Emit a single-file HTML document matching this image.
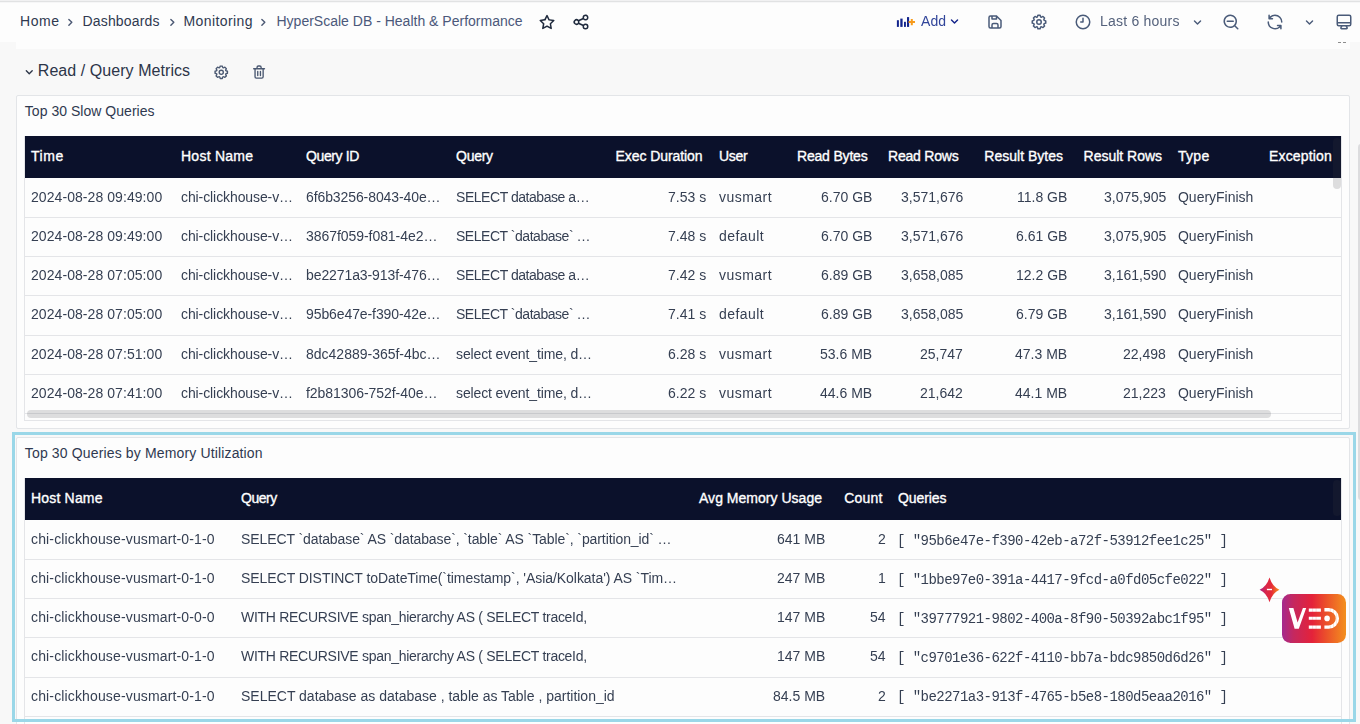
<!DOCTYPE html>
<html><head><meta charset="utf-8"><title>HyperScale DB - Health &amp; Performance</title>
<style>
*{box-sizing:border-box;margin:0;padding:0}
html,body{width:1360px;height:724px;overflow:hidden}
body{background:#f8f8f8;font-family:"Liberation Sans",sans-serif;font-size:14px;color:#353f52;position:relative}
.abs{position:absolute}
.t{position:absolute;white-space:nowrap;line-height:20px;height:20px}
.g{will-change:transform}
.r{text-align:right}
.hd{color:#fff;-webkit-text-stroke:0.35px #fff}
.mono{font-family:"Liberation Mono",monospace;font-size:14px}
.bc{color:#2f3950}
svg{position:absolute;overflow:visible}
.ln{position:absolute;height:1px;background:#e4e5e8}
</style></head><body>
<!-- top bar -->
<div class="abs" style="left:0;top:0;width:1360px;height:42px;background:#fdfdfd"></div>
<div class="abs" style="left:16px;top:42px;width:1334px;height:7px;background:#fdfdfd"></div>
<div class="abs" style="left:0;top:0;width:1360px;height:1px;background:#f1f1f2"></div>
<div class="abs" style="left:0;top:1px;width:1360px;height:1px;background:#e1e2e3"></div>
<div class="abs" style="left:0;top:2px;width:1360px;height:1px;background:#f6f6f7"></div>
<div class="abs" style="left:1338px;top:42px;width:3px;height:1px;background:#8d8d8d"></div>
<div class="abs" style="left:1343px;top:42px;width:3px;height:1px;background:#8d8d8d"></div>

<div class="t bc" style="left:20px;top:11.0px;letter-spacing:0.547px;">Home</div>
<div class="t bc" style="left:82.5px;top:11.0px;letter-spacing:0.167px;">Dashboards</div>
<div class="t bc" style="left:183.5px;top:11.0px;letter-spacing:0.403px;">Monitoring</div>
<div class="t " style="left:276.5px;top:11.0px;letter-spacing:0.004px;color:#4b587a">HyperScale DB - Health &amp; Performance</div>
<div class="t g" style="left:921px;top:11.0px;letter-spacing:0.039px;color:#31459a">Add</div>
<div class="t g" style="left:1100px;top:11.0px;letter-spacing:0.222px;color:#55627c">Last 6 hours</div>
<!-- row title -->
<div class="t " style="left:37.8px;top:60.7px;letter-spacing:0.060px;font-size:16px;color:#2c3548">Read / Query Metrics</div>
<!-- panel 1 -->
<div class="abs" style="left:16px;top:95px;width:1334px;height:334px;background:#fdfdfd;border:1px solid #e3e5e8;border-radius:2px"></div>
<div class="abs" style="left:24px;top:136px;width:1318px;height:285px;border:1px solid #e4e5e8;border-top:0"></div>
<div class="abs" style="left:25px;top:136px;width:1316px;height:42px;background:#0b112b"></div>

<div class="t bc" style="left:24.8px;top:101.0px;letter-spacing:0.034px;">Top 30 Slow Queries</div>
<div class="t hd" style="left:31px;top:146.0px;letter-spacing:0.535px;">Time</div>
<div class="t hd" style="left:181px;top:146.0px;letter-spacing:0.246px;">Host Name</div>
<div class="t hd" style="left:306px;top:146.0px;letter-spacing:-0.388px;">Query ID</div>
<div class="t hd" style="left:456px;top:146.0px;letter-spacing:-0.256px;">Query</div>
<div class="t r hd" style="right:657.47px;top:146.0px;letter-spacing:-0.070px;">Exec Duration</div>
<div class="t hd" style="left:719px;top:146.0px;letter-spacing:-0.288px;">User</div>
<div class="t r hd" style="right:492.49px;top:146.0px;letter-spacing:-0.186px;">Read Bytes</div>
<div class="t r hd" style="right:401.51px;top:146.0px;letter-spacing:-0.209px;">Read Rows</div>
<div class="t r hd" style="right:296.99px;top:146.0px;letter-spacing:0.010px;">Result Bytes</div>
<div class="t r hd" style="right:198.02px;top:146.0px;letter-spacing:-0.019px;">Result Rows</div>
<div class="t hd" style="left:1178px;top:146.0px;letter-spacing:0.280px;">Type</div>
<div class="t r hd" style="right:28.15px;top:146.0px;letter-spacing:0.152px;">Exception</div>
<div class="t g" style="left:31px;top:186.8px;letter-spacing:0.067px;">2024-08-28 09:49:00</div>
<div class="t g" style="left:181px;top:186.8px;letter-spacing:-0.093px;">chi-clickhouse-v…</div>
<div class="t g" style="left:306px;top:186.8px;letter-spacing:-0.096px;">6f6b3256-8043-40e…</div>
<div class="t g" style="left:456px;top:186.8px;letter-spacing:-0.452px;">SELECT database a…</div>
<div class="t r g" style="right:653.50px;top:186.8px;">7.53 s</div>
<div class="t g" style="left:719px;top:186.8px;letter-spacing:0.467px;">vusmart</div>
<div class="t r g" style="right:488.00px;top:186.8px;">6.70 GB</div>
<div class="t r g" style="right:397.00px;top:186.8px;">3,571,676</div>
<div class="t r g" style="right:293.00px;top:186.8px;">11.8 GB</div>
<div class="t r g" style="right:194.00px;top:186.8px;">3,075,905</div>
<div class="t g" style="left:1178px;top:186.8px;letter-spacing:-0.017px;">QueryFinish</div>
<div class="ln" style="left:25px;top:217px;width:1316px"></div>
<div class="t g" style="left:31px;top:226.0px;letter-spacing:0.067px;">2024-08-28 09:49:00</div>
<div class="t g" style="left:181px;top:226.0px;letter-spacing:-0.093px;">chi-clickhouse-v…</div>
<div class="t g" style="left:306px;top:226.0px;letter-spacing:-0.055px;">3867f059-f081-4e2…</div>
<div class="t g" style="left:456px;top:226.0px;letter-spacing:-0.468px;">SELECT `database` …</div>
<div class="t r g" style="right:653.50px;top:226.0px;">7.48 s</div>
<div class="t g" style="left:719px;top:226.0px;letter-spacing:0.426px;">default</div>
<div class="t r g" style="right:488.00px;top:226.0px;">6.70 GB</div>
<div class="t r g" style="right:397.00px;top:226.0px;">3,571,676</div>
<div class="t r g" style="right:293.00px;top:226.0px;">6.61 GB</div>
<div class="t r g" style="right:194.00px;top:226.0px;">3,075,905</div>
<div class="t g" style="left:1178px;top:226.0px;letter-spacing:-0.017px;">QueryFinish</div>
<div class="ln" style="left:25px;top:256px;width:1316px"></div>
<div class="t g" style="left:31px;top:265.2px;letter-spacing:0.067px;">2024-08-28 07:05:00</div>
<div class="t g" style="left:181px;top:265.2px;letter-spacing:-0.093px;">chi-clickhouse-v…</div>
<div class="t g" style="left:306px;top:265.2px;letter-spacing:-0.096px;">be2271a3-913f-476…</div>
<div class="t g" style="left:456px;top:265.2px;letter-spacing:-0.452px;">SELECT database a…</div>
<div class="t r g" style="right:653.50px;top:265.2px;">7.42 s</div>
<div class="t g" style="left:719px;top:265.2px;letter-spacing:0.467px;">vusmart</div>
<div class="t r g" style="right:488.00px;top:265.2px;">6.89 GB</div>
<div class="t r g" style="right:397.00px;top:265.2px;">3,658,085</div>
<div class="t r g" style="right:293.00px;top:265.2px;">12.2 GB</div>
<div class="t r g" style="right:194.00px;top:265.2px;">3,161,590</div>
<div class="t g" style="left:1178px;top:265.2px;letter-spacing:-0.017px;">QueryFinish</div>
<div class="ln" style="left:25px;top:295px;width:1316px"></div>
<div class="t g" style="left:31px;top:304.4px;letter-spacing:0.067px;">2024-08-28 07:05:00</div>
<div class="t g" style="left:181px;top:304.4px;letter-spacing:-0.093px;">chi-clickhouse-v…</div>
<div class="t g" style="left:306px;top:304.4px;letter-spacing:-0.096px;">95b6e47e-f390-42e…</div>
<div class="t g" style="left:456px;top:304.4px;letter-spacing:-0.468px;">SELECT `database` …</div>
<div class="t r g" style="right:653.50px;top:304.4px;">7.41 s</div>
<div class="t g" style="left:719px;top:304.4px;letter-spacing:0.426px;">default</div>
<div class="t r g" style="right:488.00px;top:304.4px;">6.89 GB</div>
<div class="t r g" style="right:397.00px;top:304.4px;">3,658,085</div>
<div class="t r g" style="right:293.00px;top:304.4px;">6.79 GB</div>
<div class="t r g" style="right:194.00px;top:304.4px;">3,161,590</div>
<div class="t g" style="left:1178px;top:304.4px;letter-spacing:-0.017px;">QueryFinish</div>
<div class="ln" style="left:25px;top:335px;width:1316px"></div>
<div class="t g" style="left:31px;top:343.6px;letter-spacing:0.067px;">2024-08-28 07:51:00</div>
<div class="t g" style="left:181px;top:343.6px;letter-spacing:-0.093px;">chi-clickhouse-v…</div>
<div class="t g" style="left:306px;top:343.6px;letter-spacing:-0.003px;">8dc42889-365f-4bc…</div>
<div class="t g" style="left:456px;top:343.6px;letter-spacing:-0.121px;">select event_time, d…</div>
<div class="t r g" style="right:653.50px;top:343.6px;">6.28 s</div>
<div class="t g" style="left:719px;top:343.6px;letter-spacing:0.467px;">vusmart</div>
<div class="t r g" style="right:488.00px;top:343.6px;">53.6 MB</div>
<div class="t r g" style="right:397.00px;top:343.6px;">25,747</div>
<div class="t r g" style="right:293.00px;top:343.6px;">47.3 MB</div>
<div class="t r g" style="right:194.00px;top:343.6px;">22,498</div>
<div class="t g" style="left:1178px;top:343.6px;letter-spacing:-0.017px;">QueryFinish</div>
<div class="ln" style="left:25px;top:374px;width:1316px"></div>
<div class="t g" style="left:31px;top:382.8px;letter-spacing:0.067px;">2024-08-28 07:41:00</div>
<div class="t g" style="left:181px;top:382.8px;letter-spacing:-0.093px;">chi-clickhouse-v…</div>
<div class="t g" style="left:306px;top:382.8px;letter-spacing:-0.055px;">f2b81306-752f-40e…</div>
<div class="t g" style="left:456px;top:382.8px;letter-spacing:-0.121px;">select event_time, d…</div>
<div class="t r g" style="right:653.50px;top:382.8px;">6.22 s</div>
<div class="t g" style="left:719px;top:382.8px;letter-spacing:0.467px;">vusmart</div>
<div class="t r g" style="right:488.00px;top:382.8px;">44.6 MB</div>
<div class="t r g" style="right:397.00px;top:382.8px;">21,642</div>
<div class="t r g" style="right:293.00px;top:382.8px;">44.1 MB</div>
<div class="t r g" style="right:194.00px;top:382.8px;">21,223</div>
<div class="t g" style="left:1178px;top:382.8px;letter-spacing:-0.017px;">QueryFinish</div>
<div class="ln" style="left:25px;top:413px;width:1316px"></div>
<div class="abs" style="left:27px;top:410px;width:1244px;height:8px;border-radius:4px;background:rgba(59,60,68,.165)"></div>
<div class="abs" style="left:1333px;top:138px;width:8px;height:50.5px;border-radius:4px;background:rgba(59,60,68,.165)"></div>
<!-- panel 2 -->
<div class="abs" style="left:16px;top:437px;width:1334px;height:290px;background:#fdfdfd;border:1px solid #e3e5e8;border-radius:2px"></div>
<div class="abs" style="left:24px;top:478px;width:1318px;height:260px;border:1px solid #e4e5e8;border-top:0"></div>
<div class="abs" style="left:25px;top:478px;width:1316px;height:42px;background:#0b112b"></div>

<div class="t bc" style="left:24.8px;top:443.0px;letter-spacing:0.147px;">Top 30 Queries by Memory Utilization</div>
<div class="abs" style="left:1333px;top:480px;width:8px;height:35.5px;border-radius:4px;background:rgba(59,60,68,.165)"></div>
<div class="t hd" style="left:31px;top:488.0px;letter-spacing:0.184px;">Host Name</div>
<div class="t hd" style="left:241px;top:488.0px;letter-spacing:-0.481px;">Query</div>
<div class="t r hd" style="right:537.98px;top:488.0px;letter-spacing:0.021px;">Avg Memory Usage</div>
<div class="t r hd" style="right:477.52px;top:488.0px;letter-spacing:0.185px;">Count</div>
<div class="t hd" style="left:898px;top:488.0px;letter-spacing:-0.089px;">Queries</div>
<div class="t  g" style="left:31px;top:528.8px;letter-spacing:0.144px;">chi-clickhouse-vusmart-0-1-0</div>
<div class="t  g" style="left:241px;top:528.8px;letter-spacing:-0.095px;">SELECT `database` AS `database`, `table` AS `Table`, `partition_id` …</div>
<div class="t r  g" style="right:534.40px;top:528.8px;">641 MB</div>
<div class="t r  g" style="right:474.00px;top:528.8px;">2</div>
<div class="t mono g" style="left:897.2px;top:530.6px;letter-spacing:-0.533px;">[ "95b6e47e-f390-42eb-a72f-53912fee1c25" ]</div>
<div class="ln" style="left:25px;top:559px;width:1316px"></div>
<div class="t  g" style="left:31px;top:568.0px;letter-spacing:0.144px;">chi-clickhouse-vusmart-0-1-0</div>
<div class="t  g" style="left:241px;top:568.0px;letter-spacing:-0.053px;">SELECT DISTINCT toDateTime(`timestamp`, 'Asia/Kolkata') AS `Tim…</div>
<div class="t r  g" style="right:534.40px;top:568.0px;">247 MB</div>
<div class="t r  g" style="right:474.00px;top:568.0px;">1</div>
<div class="t mono g" style="left:897.2px;top:569.8px;letter-spacing:-0.533px;">[ "1bbe97e0-391a-4417-9fcd-a0fd05cfe022" ]</div>
<div class="ln" style="left:25px;top:598px;width:1316px"></div>
<div class="t  g" style="left:31px;top:607.2px;letter-spacing:0.144px;">chi-clickhouse-vusmart-0-0-0</div>
<div class="t  g" style="left:241px;top:607.2px;letter-spacing:-0.283px;">WITH RECURSIVE span_hierarchy AS ( SELECT traceId,</div>
<div class="t r  g" style="right:534.40px;top:607.2px;">147 MB</div>
<div class="t r  g" style="right:474.00px;top:607.2px;">54</div>
<div class="t mono g" style="left:897.2px;top:609.0px;letter-spacing:-0.533px;">[ "39777921-9802-400a-8f90-50392abc1f95" ]</div>
<div class="ln" style="left:25px;top:637px;width:1316px"></div>
<div class="t  g" style="left:31px;top:646.4px;letter-spacing:0.144px;">chi-clickhouse-vusmart-0-1-0</div>
<div class="t  g" style="left:241px;top:646.4px;letter-spacing:-0.283px;">WITH RECURSIVE span_hierarchy AS ( SELECT traceId,</div>
<div class="t r  g" style="right:534.40px;top:646.4px;">147 MB</div>
<div class="t r  g" style="right:474.00px;top:646.4px;">54</div>
<div class="t mono g" style="left:897.2px;top:648.2px;letter-spacing:-0.533px;">[ "c9701e36-622f-4110-bb7a-bdc9850d6d26" ]</div>
<div class="ln" style="left:25px;top:677px;width:1316px"></div>
<div class="t  g" style="left:31px;top:685.6px;letter-spacing:0.144px;">chi-clickhouse-vusmart-0-1-0</div>
<div class="t  g" style="left:241px;top:685.6px;letter-spacing:-0.004px;">SELECT database as database , table as Table , partition_id</div>
<div class="t r  g" style="right:534.40px;top:685.6px;">84.5 MB</div>
<div class="t r  g" style="right:474.00px;top:685.6px;">2</div>
<div class="t mono g" style="left:897.2px;top:687.4px;letter-spacing:-0.533px;">[ "be2271a3-913f-4765-b5e8-180d5eaa2016" ]</div>
<div class="ln" style="left:25px;top:716px;width:1316px"></div>
<div class="abs" style="left:12px;top:432px;width:1344px;height:290px;border:3px solid #9ad7e8"></div>
<div class="abs" style="left:1358px;top:144px;width:6px;height:356px;border-radius:3px;background:#dcdcde"></div>
<svg style="left:61.65px;top:13.80px" width="16.7" height="16.7" viewBox="0 0 24 24"><path fill="#4b5873" d="M14.83,11.29,10.59,7.05a1,1,0,0,0-1.42,0,1,1,0,0,0,0,1.41L12.71,12,9.17,15.54a1,1,0,0,0,0,1.41,1,1,0,0,0,.71.29,1,1,0,0,0,.71-.29l4.24-4.24A1,1,0,0,0,14.83,11.29Z"/></svg>
<svg style="left:163.65px;top:13.80px" width="16.7" height="16.7" viewBox="0 0 24 24"><path fill="#4b5873" d="M14.83,11.29,10.59,7.05a1,1,0,0,0-1.42,0,1,1,0,0,0,0,1.41L12.71,12,9.17,15.54a1,1,0,0,0,0,1.41,1,1,0,0,0,.71.29,1,1,0,0,0,.71-.29l4.24-4.24A1,1,0,0,0,14.83,11.29Z"/></svg>
<svg style="left:255.45px;top:13.80px" width="16.7" height="16.7" viewBox="0 0 24 24"><path fill="#4b5873" d="M14.83,11.29,10.59,7.05a1,1,0,0,0-1.42,0,1,1,0,0,0,0,1.41L12.71,12,9.17,15.54a1,1,0,0,0,0,1.41,1,1,0,0,0,.71.29,1,1,0,0,0,.71-.29l4.24-4.24A1,1,0,0,0,14.83,11.29Z"/></svg>
<svg style="left:538.00px;top:13.00px" width="18" height="18" viewBox="0 0 24 24"><path fill="#1f2a3d" d="M22,9.67A1,1,0,0,0,21.14,9l-5.69-.83L12.9,3a1,1,0,0,0-1.8,0L8.55,8.16,2.86,9a1,1,0,0,0-.81.68,1,1,0,0,0,.25,1l4.13,4-1,5.68A1,1,0,0,0,6.9,21.44L12,18.77l5.1,2.67a.93.93,0,0,0,.46.12,1,1,0,0,0,.59-.19,1,1,0,0,0,.4-1l-1-5.68,4.13-4A1,1,0,0,0,22,9.67Zm-6.15,4a1,1,0,0,0-.29.88l.72,4.2-3.76-2a1.06,1.06,0,0,0-.94,0l-3.76,2,.72-4.2a1,1,0,0,0-.29-.88l-3-3,4.21-.61a1,1,0,0,0,.76-.55L12,5.7l1.88,3.82a1,1,0,0,0,.76.55l4.21.61Z"/></svg>
<svg style="left:572.20px;top:12.90px" width="18" height="18" viewBox="0 0 24 24"><path fill="#1f2a3d" d="M18,14a4,4,0,0,0-3.08,1.48l-5.1-2.35a3.64,3.64,0,0,0,0-2.26l5.1-2.35A4,4,0,1,0,14,6a4.17,4.17,0,0,0,.07.71L8.79,9.14a4,4,0,1,0,0,5.72l5.28,2.43A4.17,4.17,0,0,0,14,18a4,4,0,1,0,4-4ZM18,4a2,2,0,1,1-2,2A2,2,0,0,1,18,4ZM6,14a2,2,0,1,1,2-2A2,2,0,0,1,6,14Zm12,6a2,2,0,1,1,2-2A2,2,0,0,1,18,20Z"/></svg>
<svg style="left:896px;top:14px" width="20" height="16" viewBox="896 14 20 16"><g fill="#12248c"><rect x="896.9" y="20.2" width="2" height="6.7"/><rect x="900.3" y="18.6" width="2.3" height="8.3"/><rect x="904" y="21.8" width="1.9" height="5.1"/><rect x="907" y="17.1" width="2.1" height="9.8"/></g><path d="M908.6 22.1h6.4M911.8 18.9v6.3" stroke="#f79b1c" stroke-width="2" fill="none"/></svg>
<svg style="left:945.90px;top:13.20px" width="17" height="17" viewBox="0 0 24 24"><path fill="#14248a" d="M17,9.17a1,1,0,0,0-1.41,0L12,12.71,8.46,9.17a1,1,0,0,0-1.41,0,1,1,0,0,0,0,1.42l4.24,4.24a1,1,0,0,0,1.42,0L17,10.59A1,1,0,0,0,17,9.17Z"/></svg>
<svg style="left:986.10px;top:12.90px" width="18" height="18" viewBox="0 0 24 24"><path fill="#4a5b79" d="m20.71 9.29-6-6a1 1 0 0 0-.32-.21A1.09 1.09 0 0 0 14 3H6a3 3 0 0 0-3 3v12a3 3 0 0 0 3 3h12a3 3 0 0 0 3-3v-8a1 1 0 0 0-.29-.71ZM9 5h4v2H9Zm6 14H9v-3a1 1 0 0 1 1-1h4a1 1 0 0 1 1 1Zm4-1a1 1 0 0 1-1 1h-1v-3a3 3 0 0 0-3-3h-4a3 3 0 0 0-3 3v3H6a1 1 0 0 1-1-1V6a1 1 0 0 1 1-1h1v3a1 1 0 0 0 1 1h6a1 1 0 0 0 1-1V6.41l4 4Z"/></svg>
<svg style="left:1030.00px;top:12.90px" width="18" height="18" viewBox="0 0 24 24"><path fill="#4a5b79" d="M21.32,9.55l-1.89-.63.89-1.78A1,1,0,0,0,20.13,6L18,3.87a1,1,0,0,0-1.15-.19l-1.78.89-.63-1.89A1,1,0,0,0,13.5,2h-3a1,1,0,0,0-.95.68L8.92,4.57,7.14,3.68A1,1,0,0,0,6,3.87L3.87,6a1,1,0,0,0-.19,1.15l.89,1.78-1.89.63A1,1,0,0,0,2,10.5v3a1,1,0,0,0,.68.95l1.89.63-.89,1.78A1,1,0,0,0,3.87,18L6,20.13a1,1,0,0,0,1.15.19l1.78-.89.63,1.89a1,1,0,0,0,.95.68h3a1,1,0,0,0,.95-.68l.63-1.89,1.78.89A1,1,0,0,0,18,20.13L20.13,18a1,1,0,0,0,.19-1.15l-.89-1.78,1.89-.63A1,1,0,0,0,22,13.5v-3A1,1,0,0,0,21.32,9.55ZM20,12.78l-1.2.4A2,2,0,0,0,17.64,16l.57,1.14-1.1,1.1L16,17.64a2,2,0,0,0-2.79,1.16l-.4,1.2H11.22l-.4-1.2A2,2,0,0,0,8,17.64l-1.14.57-1.1-1.1L6.36,16A2,2,0,0,0,5.2,13.18L4,12.78V11.22l1.2-.4A2,2,0,0,0,6.36,8L5.79,6.89l1.1-1.1L8,6.36A2,2,0,0,0,10.82,5.2l.4-1.2h1.56l.4,1.2A2,2,0,0,0,16,6.36l1.14-.57,1.1,1.1L17.64,8a2,2,0,0,0,1.16,2.79l1.2.4ZM12,8a4,4,0,1,0,4,4A4,4,0,0,0,12,8Zm0,6a2,2,0,1,1,2-2A2,2,0,0,1,12,14Z"/></svg>
<svg style="left:1074.00px;top:12.90px" width="18" height="18" viewBox="0 0 24 24"><path fill="#4a5b79" d="M12,2A10,10,0,1,0,22,12,10.01114,10.01114,0,0,0,12,2Zm0,18a8,8,0,1,1,8-8A8.00917,8.00917,0,0,1,12,20ZM12,6a.99974.99974,0,0,0-1,1v4H9a1,1,0,0,0,0,2h3a.99974.99974,0,0,0,1-1V7A.99974.99974,0,0,0,12,6Z"/></svg>
<svg style="left:1188.50px;top:13.60px" width="17" height="17" viewBox="0 0 24 24"><path fill="#4a5b79" d="M17,9.17a1,1,0,0,0-1.41,0L12,12.71,8.46,9.17a1,1,0,0,0-1.41,0,1,1,0,0,0,0,1.42l4.24,4.24a1,1,0,0,0,1.42,0L17,10.59A1,1,0,0,0,17,9.17Z"/></svg>
<svg style="left:1222.05px;top:12.85px" width="18" height="18" viewBox="0 0 24 24"><path fill="#4a5b79" d="M21.71,20.29,18,16.61A9,9,0,1,0,16.61,18l3.68,3.68a1,1,0,0,0,1.42,0A1,1,0,0,0,21.71,20.29ZM11,18a7,7,0,1,1,7-7A7,7,0,0,1,11,18Zm4-8H7a1,1,0,0,0,0,2h8a1,1,0,0,0,0-2Z"/></svg>
<svg style="left:1265.90px;top:12.90px" width="18" height="18" viewBox="0 0 24 24"><path fill="#4a5b79" d="M19.91,15.51H15.38a1,1,0,0,0,0,2h2.4A8,8,0,0,1,4,12a1,1,0,0,0-2,0,10,10,0,0,0,16.88,7.23V21a1,1,0,0,0,2,0V16.5A1,1,0,0,0,19.91,15.51ZM12,2A10,10,0,0,0,5.12,4.77V3a1,1,0,0,0-2,0V7.5a1,1,0,0,0,1,1h4.5a1,1,0,0,0,0-2H6.22A8,8,0,0,1,20,12a1,1,0,0,0,2,0A10,10,0,0,0,12,2Z"/></svg>
<svg style="left:1300.80px;top:13.60px" width="17" height="17" viewBox="0 0 24 24"><path fill="#4a5b79" d="M17,9.17a1,1,0,0,0-1.41,0L12,12.71,8.46,9.17a1,1,0,0,0-1.41,0,1,1,0,0,0,0,1.42l4.24,4.24a1,1,0,0,0,1.42,0L17,10.59A1,1,0,0,0,17,9.17Z"/></svg>
<svg style="left:1335.00px;top:13.00px" width="18" height="18" viewBox="0 0 24 24"><path fill="#4a5b79" d="M19,2H5A3,3,0,0,0,2,5V15a3,3,0,0,0,3,3H7.64l-.58,1a2,2,0,0,0,0,2,2,2,0,0,0,1.75,1h6.46A2,2,0,0,0,17,21a2,2,0,0,0,0-2l-.59-1H19a3,3,0,0,0,3-3V5A3,3,0,0,0,19,2ZM8.77,20,10,18H14l1.2,2ZM20,15a1,1,0,0,1-1,1H5a1,1,0,0,1-1-1V14H20Zm0-3H4V5A1,1,0,0,1,5,4H19a1,1,0,0,1,1,1Z"/></svg>
<svg style="left:21.25px;top:64.05px" width="16.5" height="16.5" viewBox="0 0 24 24"><path fill="#2c3548" d="M17,9.17a1,1,0,0,0-1.41,0L12,12.71,8.46,9.17a1,1,0,0,0-1.41,0,1,1,0,0,0,0,1.42l4.24,4.24a1,1,0,0,0,1.42,0L17,10.59A1,1,0,0,0,17,9.17Z"/></svg>
<svg style="left:212.65px;top:63.75px" width="16.5" height="16.5" viewBox="0 0 24 24"><path fill="#4a5871" d="M21.32,9.55l-1.89-.63.89-1.78A1,1,0,0,0,20.13,6L18,3.87a1,1,0,0,0-1.15-.19l-1.78.89-.63-1.89A1,1,0,0,0,13.5,2h-3a1,1,0,0,0-.95.68L8.92,4.57,7.14,3.68A1,1,0,0,0,6,3.87L3.87,6a1,1,0,0,0-.19,1.15l.89,1.78-1.89.63A1,1,0,0,0,2,10.5v3a1,1,0,0,0,.68.95l1.89.63-.89,1.78A1,1,0,0,0,3.87,18L6,20.13a1,1,0,0,0,1.15.19l1.78-.89.63,1.89a1,1,0,0,0,.95.68h3a1,1,0,0,0,.95-.68l.63-1.89,1.78.89A1,1,0,0,0,18,20.13L20.13,18a1,1,0,0,0,.19-1.15l-.89-1.78,1.89-.63A1,1,0,0,0,22,13.5v-3A1,1,0,0,0,21.32,9.55ZM20,12.78l-1.2.4A2,2,0,0,0,17.64,16l.57,1.14-1.1,1.1L16,17.64a2,2,0,0,0-2.79,1.16l-.4,1.2H11.22l-.4-1.2A2,2,0,0,0,8,17.64l-1.14.57-1.1-1.1L6.36,16A2,2,0,0,0,5.2,13.18L4,12.78V11.22l1.2-.4A2,2,0,0,0,6.36,8L5.79,6.89l1.1-1.1L8,6.36A2,2,0,0,0,10.82,5.2l.4-1.2h1.56l.4,1.2A2,2,0,0,0,16,6.36l1.14-.57,1.1,1.1L17.64,8a2,2,0,0,0,1.16,2.79l1.2.4ZM12,8a4,4,0,1,0,4,4A4,4,0,0,0,12,8Zm0,6a2,2,0,1,1,2-2A2,2,0,0,1,12,14Z"/></svg>
<svg style="left:250.90px;top:63.90px" width="16.2" height="16.2" viewBox="0 0 24 24"><path fill="#4a5871" d="M10,18a1,1,0,0,0,1-1V11a1,1,0,0,0-2,0v6A1,1,0,0,0,10,18ZM20,6H16V5a3,3,0,0,0-3-3H11A3,3,0,0,0,8,5V6H4A1,1,0,0,0,4,8H5V19a3,3,0,0,0,3,3h8a3,3,0,0,0,3-3V8h1a1,1,0,0,0,0-2ZM10,5a1,1,0,0,1,1-1h2a1,1,0,0,1,1,1V6H10Zm7,14a1,1,0,0,1-1,1H8a1,1,0,0,1-1-1V8H17Zm-3-1a1,1,0,0,0,1-1V11a1,1,0,0,0-2,0v6A1,1,0,0,0,14,18Z"/></svg>
<svg style="left:1256px;top:574px" width="96" height="74" viewBox="1256 574 96 74">
<defs><linearGradient id="vg" x1="1282" y1="0" x2="1346" y2="0" gradientUnits="userSpaceOnUse"><stop offset="0" stop-color="#a42a8e"/><stop offset=".18" stop-color="#c5285f"/><stop offset=".47" stop-color="#e4223a"/><stop offset=".68" stop-color="#eb4e2b"/><stop offset="1" stop-color="#f3901e"/></linearGradient>
<linearGradient id="sg" x1="1260" y1="0" x2="1279" y2="0" gradientUnits="userSpaceOnUse"><stop offset="0" stop-color="#ad2384"/><stop offset=".3" stop-color="#d8264c"/><stop offset=".6" stop-color="#e52a38"/><stop offset="1" stop-color="#f68d1b"/></linearGradient></defs>
<rect x="1282" y="594" width="64" height="49" rx="8.5" fill="url(#vg)"/>
<path fill="#fff" d="M1288.8 608h4.6l4.2 14.6 5.3-14.6h3.3l-7.4 20.7h-4.2z"/>
<path fill="#fff" d="M1308.8 608.6h12.1v3.1h-12.1zM1308.8 616.7h12.1v3.1h-12.1zM1308.8 625.4h12.1v3.3h-12.1z"/>
<path fill="#fff" d="M1324.4 608.1h4.35a10.3 10.3 0 0 1 0 20.6h-4.35v-3.3h4.35a7 7 0 0 0 0-14h-4.35z"/>
<circle cx="1327.1" cy="618.4" r="2.8" fill="#fff"/>
<path d="M1312.6 608v21M1316.1 608v21M1330.3 608v21M1333.5 608v21M1336.6 608v21" stroke="url(#vg)" stroke-width=".5" opacity=".35" fill="none"/>
<path fill="url(#sg)" d="M1269.5 577.6q2.9 9.2 9.9 12.2q-7 3-9.9 12.4q-2.9-9.4-9.9-12.4q7-3 9.9-12.2z"/>
<rect x="1266.9" y="588.8" width="5.1" height="1.4" fill="#fff"/>
</svg>
</body></html>
